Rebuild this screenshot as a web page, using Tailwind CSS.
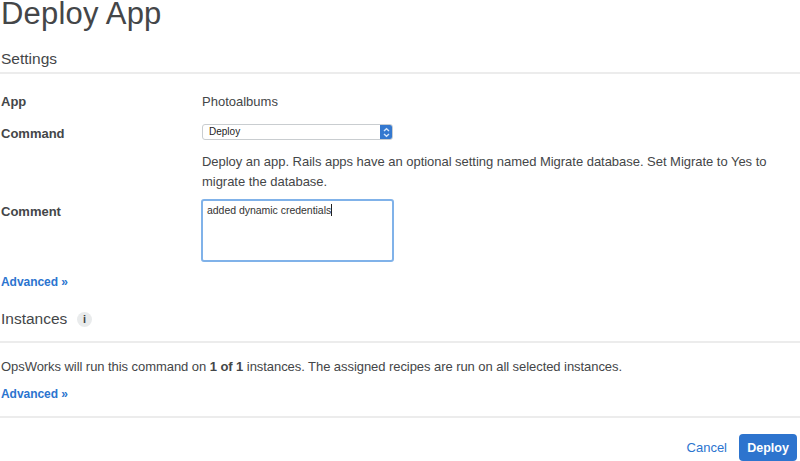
<!DOCTYPE html>
<html lang="en">
<head>
<meta charset="utf-8">
<title>Deploy App</title>
<script src="https://cdn.jsdelivr.net/npm/@tailwindcss/browser@4"></script>
</head>
<body class="bg-white">
<main class="flex h-[461px] w-[800px] flex-col overflow-hidden font-['Liberation_Sans',Arial,sans-serif] text-[13px] leading-5 text-[#444648]">
  <h1 class="h-12 pl-px text-[31px] leading-[27px] tracking-[0.2px] whitespace-nowrap">Deploy App</h1>
  <h2 class="h-[27px] border-b-2 border-[#ececec] pl-px text-[15.5px] leading-[21px]">Settings</h2>

  <section class="grid grid-cols-[201px_1fr] grid-rows-[32px_28px_50px_70px] pt-[18px] pl-px">
    <div class="font-bold">App</div>
    <div>Photoalbums</div>
    <div class="font-bold">Command</div>
    <div>
      <div class="flex h-4 w-[191px] items-center overflow-hidden rounded-[3px] border border-[#c9cdd0] pl-1.5 text-[10px] leading-3 text-[#222]">
        <span class="flex-1">Deploy</span>
        <span class="-my-px -mr-px flex h-4 w-[13px] items-center justify-center bg-[#3478cf]">
          <svg class="h-[11px] w-[9px]" viewBox="0 0 9 11" fill="none" stroke="#d5e6fb" stroke-width="1.4"><path d="M2 4 4.5 1.7 7 4M2 7 4.5 9.3 7 7"/></svg>
        </span>
      </div>
    </div>
    <p class="col-start-2 tracking-[-0.03px] whitespace-nowrap">Deploy an app. Rails apps have an optional setting named Migrate database. Set Migrate to Yes to<br>migrate the database.</p>
    <div class="font-bold">Comment</div>
    <div class="col-start-2 -ml-px -mt-[3px]">
      <div class="flex h-[63px] w-[193px] items-start rounded-[3px] border-2 border-[#80b2e9] pt-[3px] pl-1 text-[10.5px] leading-3 tracking-[-0.03px] text-[#333]"><span>added dynamic credentials</span><i class="h-3 w-px bg-[#222]"></i></div>
    </div>
  </section>

  <a class="h-9 pl-px text-[12px] font-bold tracking-[-0.05px] text-[#2b74cf]">Advanced »</a>
  <div class="flex h-[35px] border-b-2 border-[#ececec] pl-px">
    <h2 class="w-[76px] text-[15.5px] leading-[21px]">Instances</h2>
    <span class="mt-1 flex h-[15px] w-[15px] items-center justify-center rounded-full bg-[#e9ebec] text-[11px] font-bold leading-none">i</span>
  </div>
  <p class="mt-[14px] h-7 pl-px tracking-[-0.06px] whitespace-nowrap">OpsWorks will run this command on <b>1 of 1</b> instances. The assigned recipes are run on all selected instances.</p>
  <a class="h-8 pl-px text-[12px] font-bold tracking-[-0.05px] text-[#2b74cf]">Advanced »</a>
  <footer class="flex items-start justify-end border-t-2 border-[#ececec] pt-4 pr-[3px]">
    <a class="mt-1 mr-3 text-[#2b74cf]">Cancel</a>
    <button class="h-[27px] w-[58px] rounded-[4px] bg-[#2d74ce] text-[12.5px] font-bold text-white">Deploy</button>
  </footer>
</main>
</body>
</html>
